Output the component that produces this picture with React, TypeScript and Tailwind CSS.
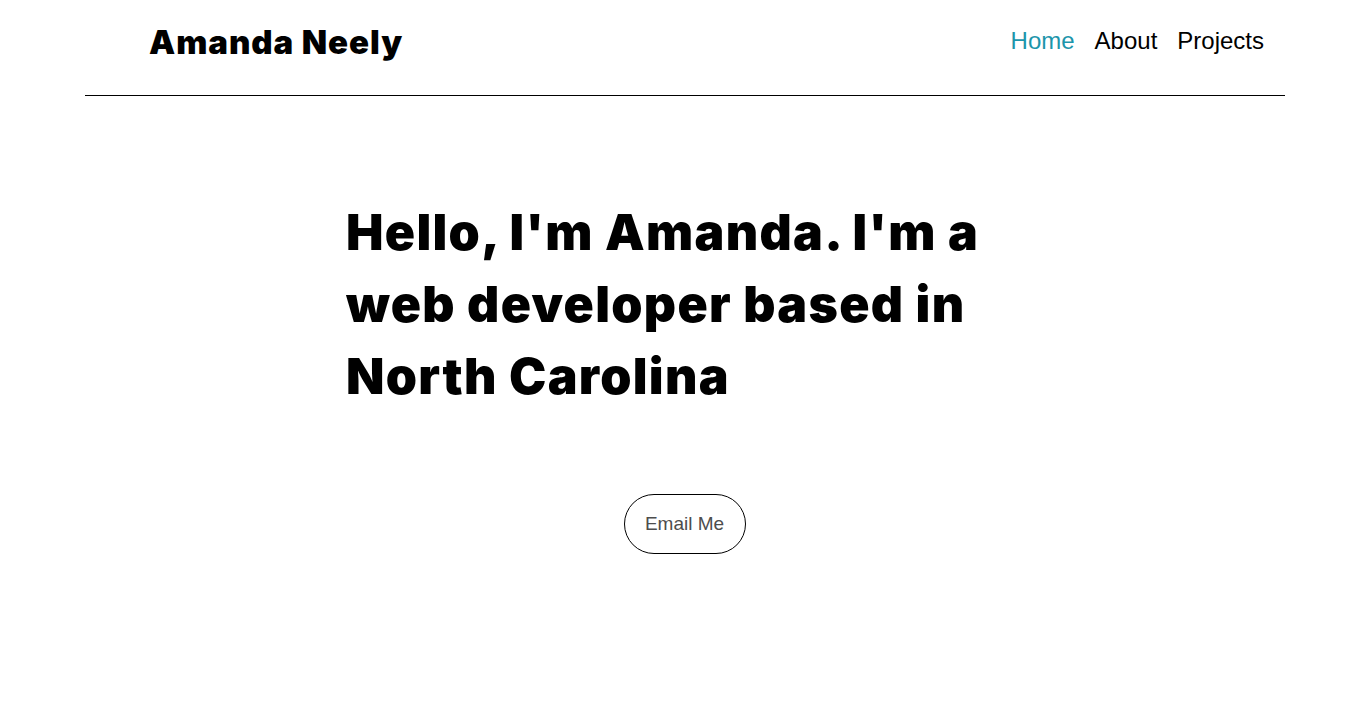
export default function App() {
  const heavy = { fontFamily: 'Inter, "DejaVu Sans", sans-serif' };
  return (
    <div className="min-h-[706px] bg-white" style={{ fontFamily: '"Liberation Sans", Arial, sans-serif' }}>
      <header className="ml-[85px] w-[1200px] h-[96px] border-b border-black flex items-start justify-between pl-[64px] pr-[21px]">
        <div className="mt-[22px] text-[33px] leading-[40px] font-black tracking-[0.95px] text-black" style={heavy}>Amanda Neely</div>
        <nav className="mt-[26px] flex gap-[20px] text-[24px] leading-[30px]">
          <a className="text-[#1c95ab]">Home</a>
          <a className="text-black">About</a>
          <a className="text-black">Projects</a>
        </nav>
      </header>
      <main className="ml-[346px] w-[700px] pt-[100px]">
        <h1 className="text-[50px] leading-[72px] font-black tracking-[1.3px] text-black" style={heavy}>
          Hello, I'm Amanda. I'm a web developer based in North Carolina
        </h1>
      </main>
      <div className="flex justify-center ml-[16px] mt-[82px]">
        <button className="w-[122px] h-[60px] rounded-full border border-black text-[19px] text-[#4d4d4d]">Email Me</button>
      </div>
    </div>
  );
}
